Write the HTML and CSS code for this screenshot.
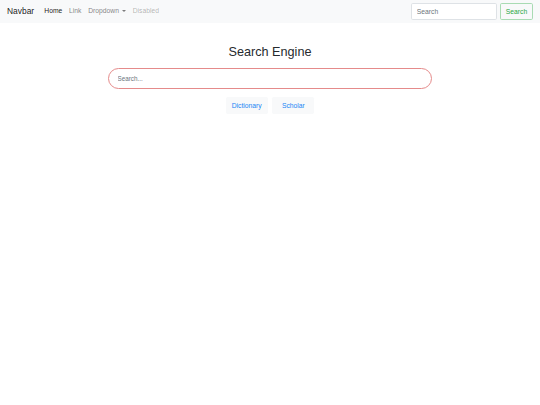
FILE: index.html
```html
<!DOCTYPE html>
<html lang="en">
<head>
<meta charset="utf-8">
<title>Search Engine</title>
<link rel="stylesheet" href="styles.css">
</head>
<body>
<nav class="navbar">
  <div class="nav-left">
    <a class="brand" href="#">Navbar</a>
    <a class="nav-link active" href="#">Home</a>
    <a class="nav-link" href="#">Link</a>
    <a class="nav-link dropdown" href="#">Dropdown</a>
    <a class="nav-link disabled" href="#">Disabled</a>
  </div>
  <form class="nav-form">
    <input class="nav-input" type="search" placeholder="Search">
    <button class="nav-btn" type="button">Search</button>
  </form>
</nav>
<main class="main">
  <h1 class="title">Search Engine</h1>
  <input class="search" type="text" placeholder="Search...">
  <div class="buttons">
    <button class="btn-light" type="button">Dictionary</button>
    <button class="btn-light" type="button">Scholar</button>
  </div>
</main>
</body>
</html>
```
FILE: styles.css
```css
html, body {
  margin: 0;
  padding: 0;
  background: #fff;
  font-family: "Liberation Sans", Arial, sans-serif;
  color: #212529;
}

.navbar {
  display: flex;
  align-items: center;
  justify-content: space-between;
  height: 23px;
  box-sizing: border-box;
  padding: 0 6.75px 0 7px;
  background: #f8f9fa;
}

.nav-left {
  display: flex;
  align-items: center;
}

.brand {
  font-size: 8.44px;
  line-height: 1.5;
  color: rgba(0, 0, 0, 0.9);
  text-decoration: none;
  margin-right: 6.75px;
}

.nav-link {
  font-size: 6.75px;
  line-height: 1.5;
  padding: 3.4px 3.375px;
  color: rgba(0, 0, 0, 0.5);
  text-decoration: none;
}

.nav-link.active {
  color: rgba(0, 0, 0, 0.9);
}

.nav-link.disabled {
  color: rgba(0, 0, 0, 0.3);
}

.dropdown::after {
  content: "";
  display: inline-block;
  margin-left: 3px;
  vertical-align: 1.6px;
  border-top: 2px solid;
  border-left: 2px solid transparent;
  border-right: 2px solid transparent;
}

.nav-form {
  display: flex;
  align-items: center;
  margin: 0;
}

.nav-input {
  width: 86px;
  height: 17px;
  box-sizing: border-box;
  padding: 0 5px;
  font-family: inherit;
  font-size: 6.75px;
  color: #495057;
  background: #fff;
  border: 1px solid #dee2e6;
  border-radius: 1.7px;
  margin: 0 3px 0 0;
  outline: none;
}

.nav-input::placeholder {
  color: #6c757d;
}

.nav-btn {
  height: 17px;
  box-sizing: border-box;
  padding: 0 5px;
  font-family: inherit;
  font-size: 6.75px;
  color: #28a745;
  background: transparent;
  border: 1px solid #a8dbb3;
  border-radius: 1.7px;
}

.main {
  display: flex;
  flex-direction: column;
  align-items: center;
}

.title {
  margin: 21.5px 0 8.5px;
  font-size: 12.66px;
  line-height: 1.2;
  font-weight: 400;
  color: #262a2e;
}

.search {
  width: 324px;
  height: 21px;
  box-sizing: border-box;
  padding: 0 8.5px;
  font-family: inherit;
  font-size: 6.3px;
  border: 1px solid #e58b8b;
  border-radius: 10.5px;
  margin: 0 0 8px;
  outline: none;
  background: #fff;
}

.search::placeholder {
  color: #6c757d;
}

.buttons {
  display: flex;
  gap: 4.7px;
}

.btn-light {
  width: 42px;
  height: 17px;
  box-sizing: border-box;
  padding: 0;
  font-family: inherit;
  font-size: 6.75px;
  color: #1a86f5;
  background: #f8f9fa;
  border: none;
  border-radius: 1.7px;
}
```
